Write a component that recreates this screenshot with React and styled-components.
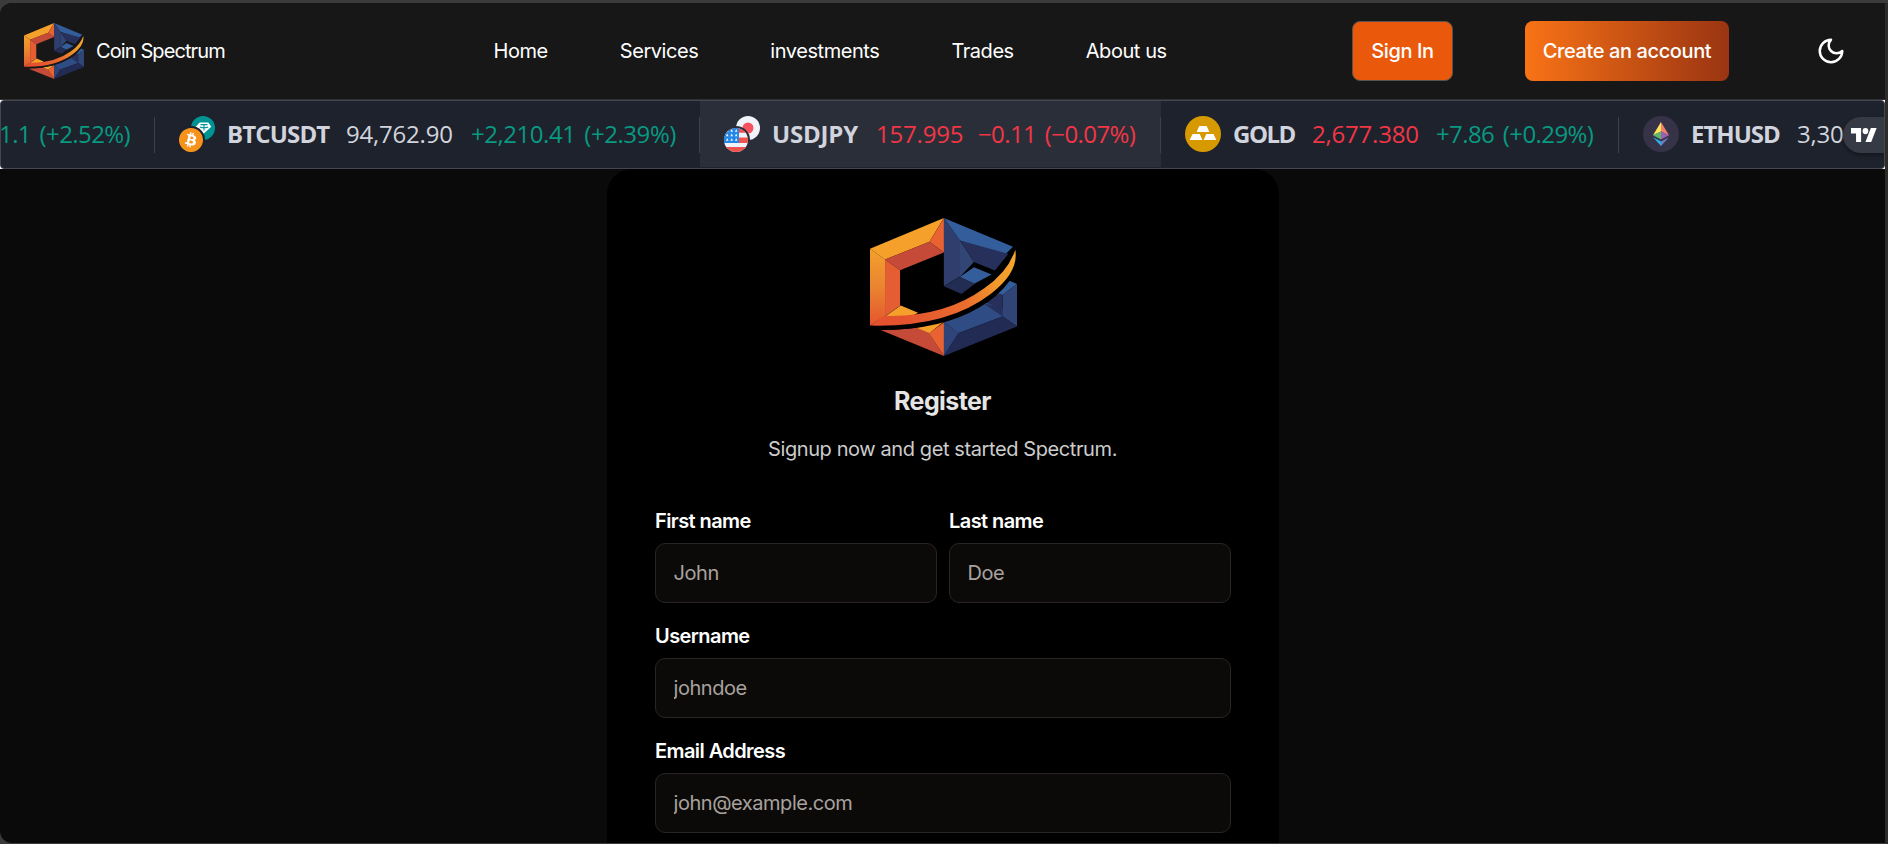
import React, { useId } from "react";
import styled, { createGlobalStyle } from "styled-components";
import { FaBitcoin } from "react-icons/fa";

const GlobalStyle = createGlobalStyle`
  * { box-sizing: border-box; }
  html, body { margin: 0; height: 844px; overflow: hidden; background: #3b3b3b; }
  body { font-family: Inter, "Liberation Sans", sans-serif; font-size: 20px; color: #fff; letter-spacing: -0.4px; }
`;

const Frame = styled.div`
  height: 844px;
  padding: 3px 3px 1px 0;
  background: linear-gradient(90deg, transparent 1885px, #2d2c2b 1885px), #3b3b3b;
  background-size: 100% 841px;
  background-position: 0 3px;
  background-repeat: no-repeat;
`;

const Window = styled.div`
  height: 840px;
  overflow: hidden;
  display: flex;
  flex-direction: column;
  background: #0a0a0a;
  border-radius: 12px 0 0 12px;
`;

const Header = styled.header`
  height: 97px;
  flex: none;
  display: flex;
  align-items: center;
  padding: 0 24px;
  background: #171717;
  border-bottom: 1px solid #303034;
`;

const Brand = styled.a`
  width: 469.5px;
  display: flex;
  align-items: center;
  gap: 12px;
  letter-spacing: -0.9px;
`;

const Nav = styled.nav`
  display: flex;
  gap: 72px;
  letter-spacing: -0.44px;
`;

const Actions = styled.div`
  margin-left: auto;
  display: flex;
  align-items: center;
  gap: 72px;
`;

const Button = styled.button`
  height: 60px;
  width: ${(p) => p.$width}px;
  padding: 0;
  border: 1px solid ${(p) => (p.$primary ? "transparent" : "#57534e")};
  border-radius: 8px;
  background: ${(p) => (p.$primary ? "linear-gradient(90deg, #f97316, #9a3412) border-box" : "#ea580c")};
  color: #fff;
  font: 500 20px Inter, "Liberation Sans", sans-serif;
  letter-spacing: -0.39px;
  white-space: nowrap;
`;

const IconButton = styled.button`
  display: flex;
  padding: 15px;
  border: 0;
  background: none;
  color: #fff;
`;

const TickerShell = styled.div`
  flex: none;
  height: 69px;
  background: #fff;
`;

const Ticker = styled.div`
  position: relative;
  height: 69px;
  display: flex;
  overflow: hidden;
  border: 1px solid #434651;
  border-radius: 4px;
  background: #1e222d;
  font: 24px "Open Sans", "Noto Sans", sans-serif;
  color: #d1d4dc;
`;

const Quote = styled.div`
  flex: none;
  width: ${(p) => p.$width}px;
  height: 66px;
  display: flex;
  align-items: center;
  justify-content: ${(p) => (p.$tail ? "flex-end" : "flex-start")};
  padding: 0 25px 0 24px;
  white-space: nowrap;
  background: ${(p) => (p.$active ? "#2a2e39" : "transparent")};
  svg { flex: none; }
`;

const Divider = styled.span`
  flex: none;
  align-self: center;
  width: 1px;
  height: 36px;
  margin-left: -1px;
  background: #3d414c;
`;

const Cell = styled.span`
  flex: none;
  padding-bottom: 1px;
`;

const Symbol = styled(Cell)`
  width: ${(p) => p.$width}px;
  margin-left: 12px;
  font-weight: 700;
  letter-spacing: ${(p) => p.$tracking}px;
`;

const Price = styled(Cell)`
  width: ${(p) => p.$width}px;
  letter-spacing: -0.2px;
  color: ${(p) => (p.$down ? "#f23645" : "#d1d4dc")};
`;

const Change = styled(Cell)`
  letter-spacing: ${(p) => p.$tracking ?? -0.6}px;
  word-spacing: 3px;
  color: ${(p) => (p.$down ? "#f23645" : "#089981")};
`;

const ProviderBadge = styled.a`
  position: absolute;
  right: 0;
  top: 16px;
  width: 41px;
  height: 36px;
  display: flex;
  align-items: center;
  padding-left: 8px;
  border-radius: 18px 0 0 18px;
  background: #363a45;
  box-shadow: 0 2px 4px rgba(0, 0, 0, 0.4);
`;

const Main = styled.main`
  flex: 1;
  min-height: 0;
  display: flex;
  justify-content: center;
  align-items: flex-start;
  overflow: hidden;
  padding-left: 1px;
`;

const Card = styled.section`
  width: 672px;
  height: 1100px;
  display: flex;
  flex-direction: column;
  align-items: center;
  padding: 48.5px 48px;
  border-radius: 25px;
  background: #000;
`;

const CardLogo = styled.div`
  display: flex;
`;

const Title = styled.h1`
  margin: 28.5px 1px 0 0;
  font-size: 25px;
  line-height: 34px;
  font-weight: 700;
  letter-spacing: -0.6px;
  color: #e5e5e5;
`;

const Subtitle = styled.p`
  margin: 19px 1px 0 0;
  line-height: 25px;
  color: #cccccc;
`;

const Form = styled.form`
  align-self: stretch;
  margin-top: 47px;
  display: grid;
  grid-template-columns: 1fr 1fr;
  gap: 21px 12px;
`;

const Field = styled.label`
  grid-column: ${(p) => (p.$wide ? "1 / -1" : "auto")};
  display: flex;
  flex-direction: column;
  gap: 9px;
  line-height: 25px;
  font-weight: 600;
  letter-spacing: -0.58px;
`;

const Input = styled.input`
  width: 100%;
  height: 60px;
  padding: 0 17.5px;
  border: 1px solid #292524;
  border-radius: 10px;
  background: #0c0a09;
  color: #fafaf9;
  font: 400 20px Inter, "Liberation Sans", sans-serif;
  letter-spacing: -0.45px;
  outline: none;
  &::placeholder { color: #a8a29e; opacity: 1; }
`;

function Logo({ width, height, gap }) {
  const id = useId();
  return (
    <svg width={width} height={height} viewBox="88 53 440 412" preserveAspectRatio="none">
      <defs>
        <linearGradient id={id + "l"} x1="0" y1="0" x2="0" y2="1">
          <stop offset="0" stopColor="#f3a02d" />
          <stop offset="0.5" stopColor="#ea8430" />
          <stop offset="1" stopColor="#e5552f" />
        </linearGradient>
        <linearGradient id={id + "s"} gradientUnits="userSpaceOnUse" x1="180" y1="350" x2="520" y2="170">
          <stop offset="0" stopColor="#e4522f" />
          <stop offset="0.5" stopColor="#ea6e2e" />
          <stop offset="0.78" stopColor="#f3992b" />
          <stop offset="1" stopColor="#f5a62c" />
        </linearGradient>
      </defs>
      <path fill="#f5a02a" d="M88 145 309 53 266 124 133 177Z" />
      <path fill={`url(#${id}l)`} d="M88 145 133.500 177V346L88 374Z" />
      <path fill="#c54a37" d="M133 177 266 124 309 156 178 209Z" />
      <path fill="#e96231" d="M309.500 53V156L266 124Z" />
      <path fill="#e55d32" d="M133 177 178 209V315L133 346Z" />
      <path fill="#f5a02a" d="M133 347 180 314 232 336 200 352Z" />
      <path fill="#c54a37" d="M118 387 Q180 388 232 380L266 397 309 465Z" />
      <path fill="#f5a02a" d="M228 381 309 362 266 397Z" />
      <path fill="#e96231" d="M309.500 364V465L265 397Z" />
      <path fill="#335e9b" d="M309 53 516 139 490 164 357 120Z" />
      <path fill="#2f3e6c" d="M309 53 357.500 120V228L309 257Z" />
      <path fill="#324676" d="M357 120 399 184 357 229Z" />
      <path fill="#26305a" d="M357 120 502 160 462 210 399 184Z" />
      <path fill="#335e9b" d="M357 229 399 200 452 222 400 249Z" />
      <path fill="#232c53" d="M309 257 357 229 402 249 362 280Z" />
      <path fill="#335e9b" d="M505 240 528 250 485 283 452 273Z" />
      <path fill="#304576" d="M528 250V377L485 347V283Z" />
      <path fill="#26305a" d="M455 273 485 283V347L425 305Z" />
      <path fill="#2f4c85" d="M309 362 435 306 485 322V347L352 397Z" />
      <path fill="#26305a" d="M430 309 485 318V347Z" />
      <path fill="#30447a" d="M309 362 353 397 309 465Z" />
      <path fill="#222b53" d="M309 465 353 397 485 347 528 377Z" />
      <path fill={gap} d="M88 376 118 387Q300 388 415 320Q470 290 508 238L528 160 517 137Q465 240 362 280L309 325 309 350Z" />
      <path fill={`url(#${id}s)`} d="M88 374 133 345Q310 350 430 263Q500 215 523 148Q534 215 450 279Q320 380 88 374Z" />
    </svg>
  );
}

const BtcUsdt = () => (
  <svg width="36" height="36" viewBox="0 0 36 36">
    <circle cx="24" cy="12" r="12" fill="#009393" />
    <path d="M20.7 6.6h8.6l3 4.2-7.8 7-7.8-7z" fill="#fff" />
    <path d="M21.500 8.6h7M25 8.6v6M20.8 11q4.2 1.6 8.4 0" stroke="#009393" strokeWidth="1.1" fill="none" />
    <circle cx="12" cy="24" r="14" fill="#1e222d" />
    <circle cx="12" cy="24" r="10.5" fill="#fff" />
    <FaBitcoin x="-0.4" y="11.6" size={24.8} color="#f7931a" />
  </svg>
);

const UsdJpy = () => (
  <svg width="36" height="36" viewBox="0 0 36 36">
    <defs>
      <clipPath id="usFlag"><circle cx="12" cy="24" r="12" /></clipPath>
    </defs>
    <circle cx="24" cy="12" r="12" fill="#f0f3fa" />
    <circle cx="24" cy="12" r="5.5" fill="#f7525f" />
    <circle cx="12" cy="24" r="14" fill="#2a2e39" />
    <g clipPath="url(#usFlag)">
      <rect y="12" width="24" height="24" fill="#f0f3fa" />
      <path fill="#ef5350" d="M0 12h24v4.8H0zM0 21.6h24V27H0zM0 31h24v5H0z" />
      <rect y="12" width="15" height="15" fill="#2287e6" />
      {[14.5, 19, 23.5].map((y) =>
        [3.2, 7.7, 12.2].map((x) => <path key={`${x}-${y}`} fill="#f0f3fa" d={`M${x} ${y - 1.4}l1.3 2.7h-2.6z`} />)
      )}
    </g>
  </svg>
);

const Gold = () => (
  <svg width="36" height="36" viewBox="0 0 36 36">
    <circle cx="18" cy="18" r="18" fill="#d69a00" />
    <path fill="#fff" d="M14.3 10h7.4l2.7 6H11.6zM7.500 18h7.2l2.7 6H4.7zM21.3 18h7.2l2.8 6H18.6z" />
  </svg>
);

const Eth = () => (
  <svg width="36" height="36" viewBox="0 0 36 36">
    <circle cx="18" cy="18" r="18" fill="#363248" />
    <path fill="#ffe55c" d="M18 6v9.5L10 19.3z" />
    <path fill="#f0806c" d="M18 6v9.5l8 3.8z" />
    <path fill="#5cb86c" d="M18 15.5V23.6l-8-4.3z" />
    <path fill="#9a62b4" d="M18 15.5V23.6l8-4.3z" />
    <path fill="#27b3e6" d="M10 21.2l8 4.3V30z" />
    <path fill="#6f7cc6" d="M26 21.2l-8 4.3V30z" />
  </svg>
);

const NAV = ["Home", "Services", "investments", "Trades", "About us"];

const QUOTES = [
  { icon: BtcUsdt, symbol: "BTCUSDT", tracking: -0.85, price: "94,762.90", change: "+2,210.41 (+2.39%)", changeTracking: -0.45, w: 545, sw: 119, pw: 125 },
  { icon: UsdJpy, symbol: "USDJPY", tracking: -0.2, price: "157.995", change: "−0.11 (−0.07%)", w: 461, sw: 104, pw: 102, down: true, priceDown: true, active: true },
  { icon: Gold, symbol: "GOLD", tracking: -1.5, price: "2,677.380", change: "+7.86 (+0.29%)", w: 458, sw: 79, pw: 124, priceDown: true },
  { icon: Eth, symbol: "ETHUSD", tracking: -1.0, price: "3,304.90", w: 420, sw: 106, pw: 125 },
];

const FIELDS = [
  { label: "First name", placeholder: "John" },
  { label: "Last name", placeholder: "Doe" },
  { label: "Username", placeholder: "johndoe", wide: true },
  { label: "Email Address", placeholder: "john@example.com", wide: true },
];

export default function App() {
  return (
    <Frame>
      <GlobalStyle />
      <Window>
        <Header>
          <Brand>
            <Logo width={60} height={56} gap="#171717" />
            Coin Spectrum
          </Brand>
          <Nav>{NAV.map((n) => <span key={n}>{n}</span>)}</Nav>
          <Actions>
            <Button $width={101}>Sign In</Button>
            <Button $width={204} $primary>Create an account</Button>
            <IconButton aria-label="Theme">
              <svg width="30" height="30" viewBox="0 0 24 24" fill="none" stroke="currentColor" strokeWidth="2" strokeLinecap="round" strokeLinejoin="round">
                <path d="M12 3a6 6 0 0 0 9 9 9 9 0 1 1-9-9Z" />
              </svg>
            </IconButton>
          </Actions>
        </Header>
        <TickerShell>
          <Ticker>
            <Quote $width={154} $tail><Change>1.1 (+2.52%)</Change></Quote>
            {QUOTES.map(({ icon: Icon, ...q }) => (
              <React.Fragment key={q.symbol}>
                <Divider />
                <Quote $width={q.w} $active={q.active}>
                  <Icon />
                  <Symbol $width={q.sw} $tracking={q.tracking}>{q.symbol}</Symbol>
                  <Price $width={q.pw} $down={q.priceDown}>{q.price}</Price>
                  {q.change && <Change $down={q.down} $tracking={q.changeTracking}>{q.change}</Change>}
                </Quote>
              </React.Fragment>
            ))}
            <ProviderBadge>
              <svg width="26" height="14" viewBox="0 4 36 18" preserveAspectRatio="none" fill="#fff">
                <path d="M14 22H7V11H0V4h14v18zM28 22h-8l7.500-18h8L28 22z" />
                <circle cx="20" cy="8" r="4" />
              </svg>
            </ProviderBadge>
          </Ticker>
        </TickerShell>
        <Main>
          <Card>
            <CardLogo><Logo width={147} height={138} gap="#000" /></CardLogo>
            <Title>Register</Title>
            <Subtitle>Signup now and get started Spectrum.</Subtitle>
            <Form>
              {FIELDS.map((f) => (
                <Field key={f.label} $wide={f.wide}>
                  {f.label}
                  <Input placeholder={f.placeholder} />
                </Field>
              ))}
            </Form>
          </Card>
        </Main>
      </Window>
    </Frame>
  );
}
